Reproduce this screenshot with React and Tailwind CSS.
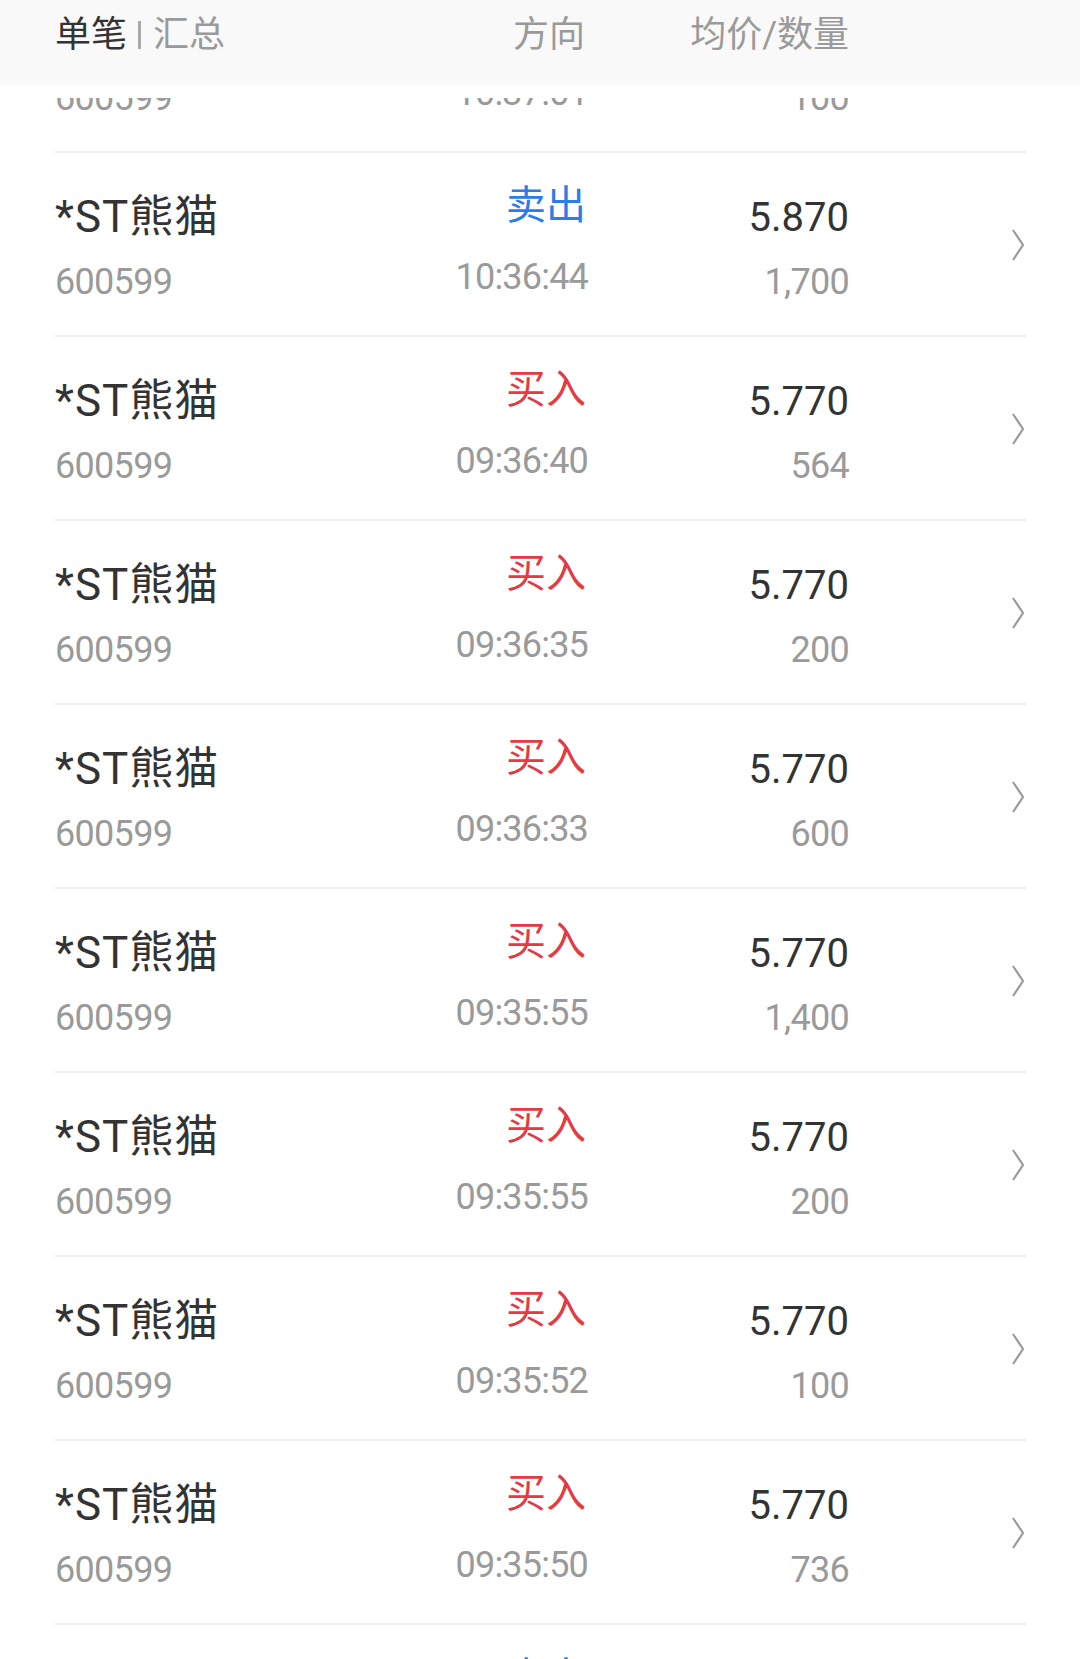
import React from 'react';

const trades = [
    { side: 'sell', time: '10:37:01', price: '5.870', qty: '100' },
    { side: 'sell', time: '10:36:44', price: '5.870', qty: '1,700' },
    { side: 'buy', time: '09:36:40', price: '5.770', qty: '564' },
    { side: 'buy', time: '09:36:35', price: '5.770', qty: '200' },
    { side: 'buy', time: '09:36:33', price: '5.770', qty: '600' },
    { side: 'buy', time: '09:35:55', price: '5.770', qty: '1,400' },
    { side: 'buy', time: '09:35:55', price: '5.770', qty: '200' },
    { side: 'buy', time: '09:35:52', price: '5.770', qty: '100' },
    { side: 'buy', time: '09:35:50', price: '5.770', qty: '736' },
    { side: 'sell', time: '09:35:41', price: '5.770', qty: '300' },
];

const font = { fontFamily: 'Roboto, "Noto Sans CJK SC", sans-serif' };

function Chevron() {
    return (
        <svg width="14" height="34" viewBox="0 0 14 34" fill="none">
            <polyline points="2,2 12,17 2,32" stroke="#9a9a9a" strokeWidth="2.2" strokeLinejoin="miter" />
        </svg>
    );
}

function TradeRow({ trade }) {
    const isBuy = trade.side === 'buy';
    return (
        <div className="ml-[55px] w-[971px] h-[184px] border-b-2 border-[#eeeeee] grid grid-cols-[345px_185px_264px_1fr]">
            <div className="flex flex-col pt-[42px]">
                <span className="text-[44px] leading-[44px] tracking-[1px] text-[#333333]">*ST熊猫</span>
                <span className="mt-[25px] text-[36px] leading-[36px] tracking-[-0.7px] text-[#9a9a9a]">600599</span>
            </div>
            <div className="flex flex-col items-end pt-[32px]">
                <span className={`mr-[-1px] text-[40px] leading-[41px] ${isBuy ? 'text-[#e23b43]' : 'text-[#2b7de9]'}`}>
                    {isBuy ? '买入' : '卖出'}
                </span>
                <span className="mt-[33px] mr-[-3px] text-[36px] leading-[36px] tracking-[-0.8px] text-[#9a9a9a]">{trade.time}</span>
            </div>
            <div className="flex flex-col items-end pt-[45px]">
                <span className="text-[40px] leading-[40px] text-[#333333]">{trade.price}</span>
                <span className="mt-[26px] text-[36px] leading-[36px] tracking-[-0.7px] text-[#9a9a9a]">{trade.qty}</span>
            </div>
            <div className="flex items-center justify-end pr-[1px] pt-[2px]">
                <Chevron />
            </div>
        </div>
    );
}

export default function App() {
    return (
        <div className="relative h-[1659px] w-[1080px] overflow-hidden bg-white" style={font}>
            {/* header sits over the scrolled list, with a white strip under it */}
            <div className="absolute inset-x-0 top-0 z-10 h-[98px] bg-white">
                <div className="h-[85px] bg-[#f9f9f9]">
                    <div className="ml-[55px] w-[971px] grid grid-cols-[345px_185px_264px_1fr] pt-[17px]">
                        <div className="flex items-center text-[36px] leading-[36px]">
                            <span className="text-[#333333]">单笔</span>
                            <span className="ml-[11px] mr-[12px] w-[3px] h-[28px] bg-[#aaaaaa]"></span>
                            <span className="text-[#9a9a9a]">汇总</span>
                        </div>
                        <div className="text-right text-[36px] leading-[36px] text-[#9a9a9a]">方向</div>
                        <div className="text-right text-[36px] leading-[36px] text-[#9a9a9a]">均价/数量</div>
                        <div></div>
                    </div>
                </div>
            </div>

            <div className="-mt-[31px]">
                {trades.map((t, i) => (
                    <TradeRow key={i} trade={t} />
                ))}
            </div>
        </div>
    );
}
